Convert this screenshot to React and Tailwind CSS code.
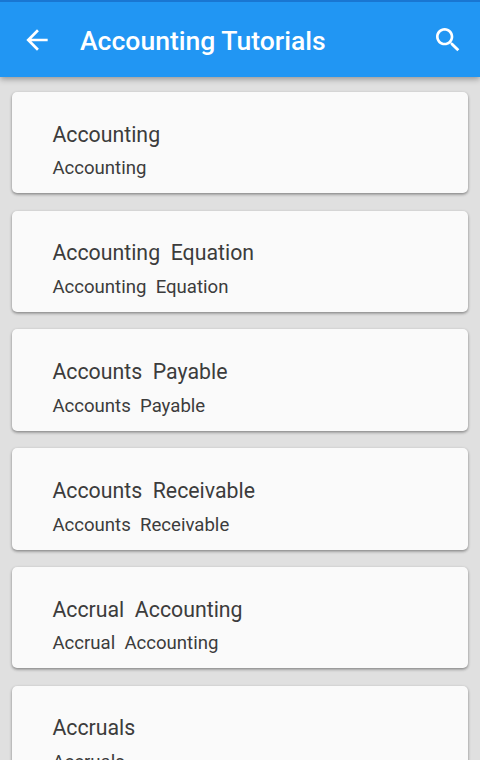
const topics = ['Accounting', 'Accounting  Equation', 'Accounts  Payable', 'Accounts  Receivable', 'Accrual  Accounting', 'Accruals'];

function BackIcon() {
  return (
    <svg viewBox="0 0 24 24" className="h-8 w-8 fill-white">
      <path d="M20 11H7.83l5.59-5.59L12 4l-8 8 8 8 1.41-1.41L7.83 13H20v-2z" />
    </svg>
  );
}

function SearchIcon() {
  return (
    <svg viewBox="0 0 24 24" className="h-8 w-8 fill-white">
      <path d="M15.5 14h-.79l-.28-.27C15.41 12.59 16 11.11 16 9.5 16 5.91 13.09 3 9.5 3S3 5.91 3 9.5 5.91 16 9.5 16c1.61 0 3.09-.59 4.23-1.57l.27.28v.79l5 4.99L20.49 19l-4.99-5zm-6 0C7.01 14 5 11.99 5 9.5S7.01 5 9.5 5 14 7.01 14 9.5 11.99 14 9.5 14z" />
    </svg>
  );
}

function TopicCard({ title }) {
  return (
    <article className="h-[101.3px] shrink-0 rounded-[5px] bg-[#fafafa] pl-[40.1px] pt-[28.6px] text-[#3c3c3c] shadow-[0_1px_3px_rgba(0,0,0,0.32),0_2px_3px_rgba(0,0,0,0.14)]">
      <h2 className="whitespace-pre text-[21.3px] leading-7">{title}</h2>
      <p className="mt-[7.8px] whitespace-pre text-[18.6px] leading-6">{title}</p>
    </article>
  );
}

export default function App() {
  return (
    <div className="flex h-[760px] w-[480px] flex-col overflow-hidden bg-[#e0e0e0] font-['Roboto',sans-serif]">
      <header className="z-10 flex h-[77px] shrink-0 items-center border-t-2 border-[#1976d2] bg-[#2196f3] pl-[21px] pr-4 shadow-[0_2px_6px_rgba(0,0,0,0.35)]">
        <BackIcon />
        <h1 className="ml-[27px] flex-1 pt-[2px] text-[26.55px] font-medium leading-8 text-white">Accounting Tutorials</h1>
        <SearchIcon />
      </header>
      <main className="flex min-h-0 flex-1 flex-col gap-[17.45px] overflow-hidden px-[12.3px] pt-[15px]">
        {topics.map((title) => <TopicCard key={title} title={title} />)}
      </main>
    </div>
  );
}
